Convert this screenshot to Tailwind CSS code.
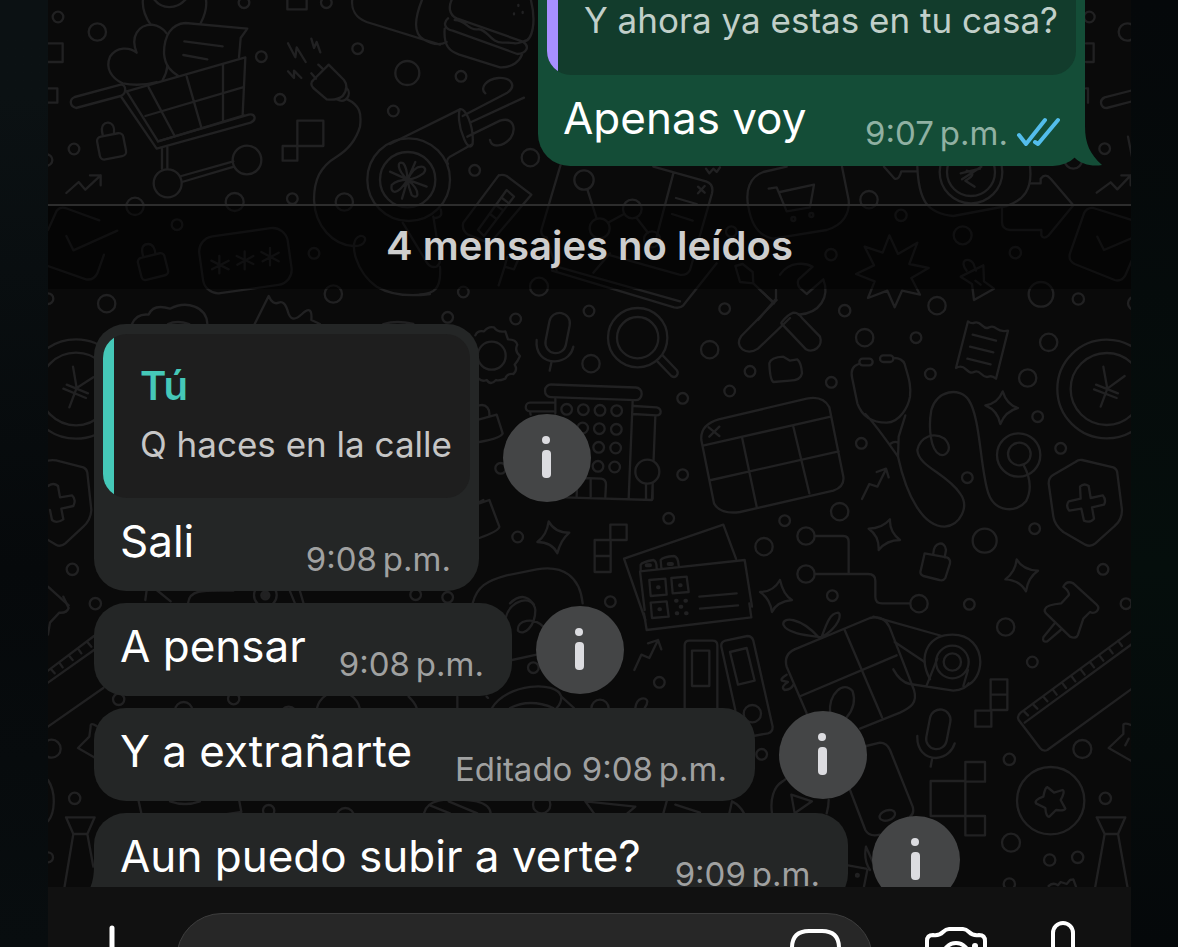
<!DOCTYPE html>
<html lang="es">
<head>
    <meta charset="UTF-8">
    <meta name="viewport" content="width=device-width, initial-scale=1.0">
    <title>Chat</title>
    <script src="https://cdn.jsdelivr.net/npm/@tailwindcss/browser@4"></script>
</head>
<body class="flex h-screen overflow-hidden bg-[#070b0d] font-[Inter,'Liberation_Sans',sans-serif]">
    <div class="w-12 shrink-0 bg-linear-to-b from-[#0b1113] from-10% via-[#06090b] via-60% to-[#080d0f]"></div>

    <main class="flex min-w-0 flex-1 flex-col bg-[#0a0a0a]">
        <section class="relative flex-1 overflow-hidden">
            <!-- Wallpaper -->
            <svg class="absolute inset-0 h-full w-full" viewBox="144 0 3249 2661" preserveAspectRatio="xMinYMin slice" fill="none" stroke="#212122" stroke-width="7" stroke-linecap="round" stroke-linejoin="round" aria-hidden="true">
                <!-- cart, plug, locks -->
                <g>
                    <circle cx="174" cy="51" r="16"/><circle cx="292" cy="96" r="26"/><circle cx="732" cy="8" r="16"/><circle cx="979" cy="8" r="16"/>
                    <circle cx="784" cy="170" r="16"/><circle cx="1073" cy="146" r="16"/><circle cx="840" cy="298" r="16"/><circle cx="1180" cy="333" r="16"/>
                    <circle cx="222" cy="447" r="16"/><circle cx="140" cy="480" r="17"/><circle cx="405" cy="619" r="26"/><circle cx="704" cy="606" r="27"/>
                    <circle cx="877" cy="596" r="16"/><circle cx="1033" cy="606" r="26"/><circle cx="531" cy="674" r="16"/><circle cx="942" cy="760" r="16"/>
                    <circle cx="1000" cy="882" r="26"/>
                    <path d="M144 130h44v56h-44M144 265h28v43h-28M862 -10v38h58v-38"/>
                    <path d="M452 74C415 20 430 -20 440 -30M602 70C622 30 622 0 612 -20M460 -5C485 30 530 30 560 -5"/>
                    <path d="M410 158C390 110 415 74 456 74Q484 78 500 100M410 158C388 140 350 140 330 170C315 205 335 235 368 250Q420 260 470 246M488 240Q500 220 502 198"/>
                    <path d="M742 86L556 69C515 72 492 105 492 160C495 200 515 215 534 227M742 86L722 114L717 172M553 124L668 139M550 165L622 178"/>
                    <path d="M380 274L736 172L728 344M380 274L474 424L732 346M446 262L524 408M560 230L604 382M669 193V364M436 348L728 262"/>
                    <path d="M362 254L224 291C208 298 208 318 228 324L362 288C382 280 378 252 362 254M362 288L470 446L752 368C772 358 764 340 746 344L474 424M486 446V506M502 442V506M544 528L700 484M546 546L702 500"/>
                    <circle cx="503" cy="550" r="42"/><circle cx="741" cy="480" r="43"/>
                    <rect x="295" y="404" width="80" height="70" rx="14" transform="rotate(-11 335 440)"/><path d="M308 404C300 375 315 367 325 368C340 370 344 385 342 400"/>
                    <path d="M199 579L236 546L256 569L302 526M270 526H302V556"/>
                    <path d="M892 362H970V438H892ZM892 438V482H848V438H892"/>
                    <path d="M864 130L886 172L890 142L917 186M934 116L942 144L950 126L961 157M864 214L882 234V212L904 234"/>
                    <path d="M986 194L1032 240Q1048 262 1028 288Q1010 302 980 298L940 264Q928 250 940 240ZM955 194L970 208M934 220L948 236M1010 298C1040 314 1056 280 1040 264M1042 298C1080 316 1085 340 1080 380C1065 430 1035 455 1010 470C960 500 942 540 942 600C945 680 1000 735 1060 738C1100 740 1105 705 1080 708C1040 720 1070 820 1130 860Q1190 895 1290 882"/>
                    <path d="M144 690L170 632Q180 620 196 624L298 661M199 708L220 751L352 692M312 764L292 820Q280 842 258 838L144 798"/>
                    <rect x="418" y="766" width="82" height="68" rx="12" transform="rotate(-14 458 800)"/><path d="M430 770C420 740 432 732 445 732C460 732 466 750 466 762"/>
                    <rect x="602" y="696" width="268" height="172" rx="46" transform="rotate(-8 736 780)"/>
                    <path d="M658 768V820M634 782L686 808M686 782L636 808M734 754V808M710 768L760 792M760 768L712 794M810 744V796M784 756L836 784M836 758L788 784"/>
                    <path d="M1058 -10C1050 30 1070 55 1100 66L1320 134M1270 -10C1240 60 1240 100 1270 118Q1310 142 1340 126"/>
                </g>
                <!-- burger, coffee, tablet -->
                <g transform="translate(1170 0)">
                    <path d="M190 -10C172 20 178 45 200 55L396 124C430 128 440 60 420 -10M174 55C158 68 164 88 188 92L382 162C410 160 420 140 400 126M194 60C230 60 232 92 262 88S300 130 340 128S370 136 396 126M164 86C160 140 180 154 208 164L330 202C370 204 390 180 396 164"/>
                    <path d="M385 15v3M372 40v3M398 36v3"/>
                    <circle cx="52" cy="219" r="36"/><circle cx="213" cy="229" r="16"/><circle cx="421" cy="473" r="26"/><circle cx="254" cy="511" r="16"/>
                    <path d="M0 432L210 328M210 328C226 320 252 380 248 430C244 450 228 436 220 410C206 380 204 340 210 328M248 432L180 470Q166 480 174 492M218 348L352 278C380 258 365 232 325 234C285 238 270 266 286 280M244 366L402 293M232 410L330 362C370 350 380 385 362 414C340 440 305 445 300 420"/>
                    <circle cx="56" cy="539" r="124"/><circle cx="53" cy="539" r="83"/>
                    <path d="M53 539C20 510 20 480 40 490Q50 500 53 539C80 480 120 500 100 520Q80 535 53 539C100 580 80 600 65 585Q55 560 53 539C20 590 0 580 5 555Q20 540 53 539M53 539L0 515M53 539L110 560M53 539L76 486M53 539L36 596"/>
                    <path d="M38 668L106 780Q118 806 140 800Q152 790 150 776L130 650M152 628Q160 652 136 654M150 800C155 870 130 880 90 884"/>
                    <path d="M326 526L220 668Q214 690 234 704L300 730L424 584L350 528Q338 522 326 526M350 570L264 690L282 708L372 590ZM318 616L338 630M300 642L318 656M336 594L354 608"/>
                    <path d="M352 770L344 800L372 808L384 780M344 800L326 856"/>
                    <circle cx="582" cy="540" r="29"/><circle cx="727" cy="627" r="28"/><circle cx="629" cy="685" r="30"/><circle cx="786" cy="718" r="24"/><path d="M592 568L620 656M654 668L702 642M740 654L774 698"/>
                    <path d="M512 494L454 690Q452 710 470 712L500 810M790 500L948 544Q972 552 966 580L900 810Q890 828 868 824L640 760M850 520L800 710M858 594L920 612M846 642L908 662M924 560L944 578M944 558L924 580"/>
                    <path d="M486 812L852 922Q870 926 880 916L980 790M500 800L870 904M610 818L660 760M948 506L958 520L970 506L980 516L990 502"/>
                    <circle cx="447" cy="860" r="27"/><circle cx="220" cy="876" r="16"/><circle cx="1024" cy="695" r="16"/>
                    <path d="M1190 500L1120 516C1080 530 1065 570 1075 620C1085 680 1110 710 1150 716L1310 690C1360 675 1380 640 1376 600L1356 500M1136 566L1160 562L1190 634L1260 622L1272 554L1170 576"/>
                    <path d="M1036 798L1058 792L1088 816L1090 850L1050 846ZM1090 850L1152 910M1104 960L1158 896"/>
                    <circle cx="1210" cy="657" r="6"/><circle cx="1264" cy="645" r="6"/>
                </g>
                <!-- rupee, starburst -->
                <g transform="translate(2340 0)">
                    <circle cx="928" cy="51" r="16"/><circle cx="1042" cy="96" r="26"/><circle cx="974" cy="446" r="16"/><circle cx="880" cy="480" r="26"/>
                    <path d="M918 130H941V186H918M918 265H924V308M1060 270L974 292C956 300 962 324 980 324L1060 303M1044 410L1056 470M950 578L992 547L1012 568L1052 526M1024 526H1052V556"/>
                    <path d="M412 500C416 600 440 640 520 648L680 618C730 600 758 570 750 500M312 500L344 536Q358 540 364 514H408"/>
                    <circle cx="573" cy="516" r="94"/><circle cx="573" cy="516" r="72"/><path d="M542 520L600 506M546 538L604 500M560 512Q596 520 556 542L584 560"/>
                    <path d="M752 550H782V536Q796 518 812 536L880 616L806 706Q790 720 784 706V690H690Q666 688 666 666V622"/>
                    <circle cx="267" cy="599" r="26"/><circle cx="363" cy="646" r="17"/><circle cx="548" cy="706" r="27"/><circle cx="706" cy="758" r="17"/><circle cx="153" cy="764" r="17"/>
                    <circle cx="471" cy="917" r="26"/><circle cx="783" cy="883" r="37"/><circle cx="895" cy="897" r="17"/><circle cx="194" cy="932" r="17"/><circle cx="1064" cy="910" r="20"/>
                    <path d="M328 706L354 762L412 728L388 792L446 804L394 834L420 884L366 872L344 922L322 872L264 894L284 844L228 822L282 796L254 740L308 758Z"/>
                    <path d="M0 824C30 780 80 790 98 800L56 838Q50 850 58 862L80 882L130 838C150 890 120 940 56 944"/>
                    <path d="M560 812C535 780 565 770 580 790L588 812M542 830L610 796L612 844L642 866L582 900L576 852ZM586 842L602 854"/>
                    <path d="M1056 660L940 624Q920 622 912 640L870 760Q864 782 884 792L1004 840Q1024 846 1036 826L1056 780M952 710L972 750L1056 714"/>
                </g>
                <!-- left edge: yen, shield -->
                <g transform="translate(0 870)">
                    <circle cx="144" cy="26" r="16"/><circle cx="320" cy="41" r="26"/><circle cx="217" cy="838" r="17"/><circle cx="286" cy="941" r="17"/>
                    <circle cx="228" cy="297" r="149"/><circle cx="228" cy="297" r="109"/><path d="M219 230L230 294L280 262M230 294L208 352M200 284L264 310M190 296L258 324"/>
                    <path d="M144 512Q160 508 180 514L250 532Q260 536 262 548L274 660Q272 690 250 710L196 760Q182 772 168 764L144 750M144 588Q160 576 174 588L180 622L216 616Q230 628 220 648L184 656L190 688Q170 702 156 690L150 660"/>
                    <path d="M396 102Q410 70 446 74Q460 40 510 56C560 30 620 50 622 102M504 102Q530 90 568 102M764 102L806 18Q818 46 836 38T864 66T906 72T934 90L960 102M1150 102Q1190 90 1240 102"/>
                    <path d="M144 890L206 946M436 930L440 900M470 900L512 934M564 940C568 900 600 900 700 902M870 904L884 938M900 904L910 938"/><circle cx="796" cy="916" r="34"/><circle cx="796" cy="916" r="12" fill="#212122"/>
                </g>
                <!-- gear, mic, magnifier, building -->
                <g transform="translate(1170 870)">
                    <circle cx="173" cy="82" r="16"/><circle cx="377" cy="87" r="16"/><circle cx="597" cy="63" r="16"/><circle cx="603" cy="221" r="26"/><circle cx="959" cy="179" r="26"/><circle cx="1004" cy="56" r="16"/><circle cx="1080" cy="244" r="16"/><circle cx="1019" cy="303" r="16"/><circle cx="878" cy="325" r="16"/><circle cx="878" cy="554" r="16"/><circle cx="836" cy="685" r="16"/><circle cx="1122" cy="770" r="26"/><circle cx="1184" cy="692" r="16"/><circle cx="332" cy="535" r="16"/><circle cx="383" cy="741" r="16"/><circle cx="661" cy="935" r="16"/><circle cx="77" cy="914" r="16"/><circle cx="173" cy="922" r="16"/>
                    <circle cx="305" cy="197" r="42"/>
                    <path d="M256 136Q262 120 282 124Q294 108 312 112Q322 128 346 124Q352 142 354 148Q378 148 382 164Q372 182 390 198Q382 216 374 224Q384 240 370 252Q350 250 346 266Q326 274 318 270Q302 288 290 270Q276 276 266 266"/>
                    <rect x="472" y="68" width="62" height="122" rx="31" transform="rotate(11 503 129)"/><path d="M440 150C436 190 460 214 495 214C530 212 546 190 550 170M484 218L479 242"/>
                    <circle cx="743" cy="143" r="89"/><circle cx="743" cy="143" r="62"/><path d="M802 214L844 258C858 268 868 250 860 240L818 196"/>
                    <rect x="465" y="288" width="290" height="38" rx="18" transform="rotate(2 610 306)"/><path d="M490 338H420C404 338 402 364 420 364H490M496 326V370M728 332L716 626M732 348L800 352C816 356 816 376 800 376L728 372M796 378L786 630L520 622M768 580V626M788 580V626M560 618L562 574Q566 564 580 564L634 566Q648 568 648 584L646 620M602 566V620M420 366L422 374"/>
                    <g><circle cx="530" cy="358" r="16"/><circle cx="580" cy="359" r="16"/><circle cx="630" cy="361" r="16"/><circle cx="680" cy="362" r="16"/><circle cx="578" cy="414" r="16"/><circle cx="628" cy="416" r="16"/><circle cx="679" cy="418" r="16"/><circle cx="626" cy="472" r="16"/><circle cx="677" cy="474" r="16"/><circle cx="624" cy="529" r="16"/><circle cx="674" cy="531" r="16"/><circle cx="772" cy="545" r="36" fill="#0a0a0a"/></g>
                    <path d="M268 346C290 340 300 360 298 376M268 388L320 374L338 430Q334 444 268 456M268 636L280 630M268 640L298 630L328 710Q328 722 268 744"/>
                    <path d="M476 694Q494 728 538 728Q512 750 502 790Q486 756 442 756Q470 736 476 694ZM661 704H710V750H661ZM661 750H614V798H662V752M614 798V846H662V798"/>
                    <path d="M702 806L1000 704L1038 806M702 806L766 990M750 844L1064 810L1086 950M750 844L764 960M752 840V824Q756 816 790 810Q800 812 800 836M814 834L812 810Q820 800 852 798Q864 800 866 826M928 920L1040 910M778 870L826 866L830 914L782 918ZM844 864L890 860L896 906L848 910Z"/>
                    <path d="M804 892h2M870 886h2M858 932h2M886 932h2M872 950h2M770 826h10M836 822h10" stroke-width="12"/>
                    <path d="M248 940C260 890 290 872 350 856L440 838C520 824 570 860 578 940M360 940Q400 900 432 944"/>
                    <path d="M1110 0L1152 38L1054 138C1030 170 1070 200 1104 176L1200 84M1158 0V24M1150 40L1160 30"/>
                    <path d="M1138 220Q1142 202 1180 200L1200 212L1222 208Q1234 218 1236 250Q1232 272 1200 272L1150 276Q1140 270 1138 220"/>
                    <path d="M986 388L1250 326Q1300 316 1318 352L1360 560Q1364 590 1330 602L1050 666Q990 674 972 640L934 450Q930 404 986 388M942 466L1322 380M964 570L1346 484M1056 442L1100 650M1210 410L1258 610M956 412L988 438M988 410L958 440"/>
                    <path d="M1170 870Q1180 915 1206 930Q1160 935 1146 966Q1140 925 1110 906Q1150 906 1170 870"/>
                </g>
                <!-- stethoscope, receipt, coin, shield, circuit -->
                <g transform="translate(2340 870)">
                    <circle cx="254" cy="143" r="26"/><circle cx="408" cy="143" r="16"/><circle cx="451" cy="252" r="16"/><circle cx="806" cy="157" r="26"/><circle cx="743" cy="264" r="26"/><circle cx="154" cy="277" r="16"/><circle cx="773" cy="380" r="16"/><circle cx="842" cy="475" r="16"/><circle cx="244" cy="460" r="16"/><circle cx="562" cy="563" r="16"/><circle cx="179" cy="665" r="26"/><circle cx="614" cy="752" r="36"/><circle cx="764" cy="716" r="16"/><circle cx="969" cy="838" r="16"/><circle cx="157" cy="917" r="16"/><circle cx="568" cy="943" r="16"/><circle cx="1038" cy="941" r="16"/>
                    <path d="M236 222Q210 230 216 262L232 340C250 390 290 398 320 398C360 396 385 350 390 320C394 280 384 260 374 222Q366 204 342 204M256 372Q284 400 354 500L356 440L376 376M330 462Q344 452 354 458"/>
                    <rect x="238" y="206" width="40" height="20" rx="10"/><rect x="300" y="196" width="40" height="20" rx="10"/>
                    <path d="M354 500C380 620 430 710 494 710C540 706 570 650 540 610C500 550 415 530 412 480C420 440 460 425 494 446C520 475 500 500 480 494C450 480 445 410 454 360C470 300 540 290 566 330C600 380 600 520 622 600C640 670 710 670 738 634C756 600 750 560 730 524"/>
                    <circle cx="716" cy="495" r="65"/><circle cx="718" cy="492" r="34"/>
                    <path d="M564 94Q574 102 584 98T606 106T628 112T650 116T684 122L648 266Q636 256 626 260T604 252T582 246T558 238T528 234ZM578 134L648 152M570 170L640 187M562 206L632 223"/>
                    <path d="M668 304Q680 344 714 354Q676 364 661 402Q654 362 616 346Q654 340 668 304ZM330 688Q328 726 360 750Q320 750 296 780Q298 738 266 716Q306 716 330 688ZM710 808Q728 840 774 842Q744 862 738 904Q718 870 676 868Q706 846 710 808Z"/>
                    <circle cx="980" cy="297" r="148"/><circle cx="980" cy="297" r="108"/><path d="M970 230L982 296L1034 258M982 296L962 350M948 284L1014 310M942 298L1010 324"/>
                    <path d="M906 510L1000 532Q1012 538 1012 550L1026 660Q1026 690 1004 708L946 760Q932 772 916 764L850 726Q824 706 820 680L806 580Q806 564 818 556L886 516Q896 508 906 510"/>
                    <path d="M900 590Q912 578 926 588L932 624L968 616Q980 630 972 644L936 652L942 686Q930 700 912 692L904 656L868 662Q856 648 866 634L902 626Z"/>
                    <path d="M246 627L268 582L292 590L318 538M290 546L318 536L326 562"/>
                    <circle cx="78" cy="738" r="26"/><circle cx="78" cy="852" r="26"/><circle cx="417" cy="941" r="26"/><path d="M104 738H190Q206 738 206 756V850M104 852H264Q286 852 286 872V920Q286 940 306 940H390"/>
                    <path d="M434 790L500 802Q512 806 510 820L496 864Q490 874 478 870L430 858Q418 852 422 842ZM460 790C462 756 494 750 498 780L494 802"/>
                    <path d="M4 98Q20 76 40 68Q56 68 66 84L120 140C130 170 100 190 78 178L4 100"/>
                </g>
                <!-- left bottom -->
                <g transform="translate(0 1800)">
                    <path d="M190 -10L206 24Q200 40 178 38L150 68L144 104M144 212L282 108M144 248L282 150M144 380L310 264M152 206L164 220M178 188L188 202M206 166L218 180M234 146L244 160M262 126L274 140M290 378Q270 366 272 380L268 410L234 444L290 476"/>
                    <circle cx="155" cy="446" r="27"/><circle cx="224" cy="595" r="17"/><circle cx="144" cy="772" r="15"/><circle cx="356" cy="298" r="17"/><circle cx="701" cy="296" r="17"/><circle cx="551" cy="332" r="26"/><circle cx="866" cy="346" r="26"/><circle cx="1015" cy="340" r="66"/><circle cx="806" cy="632" r="17"/><circle cx="1036" cy="650" r="26"/>
                    <path d="M144 540C170 580 164 640 144 664M198 652H284L262 702H220ZM220 702L192 870M262 702L280 800M416 604L424 640M718 604L724 636L670 644M510 604Q555 620 600 604"/>
                </g>
                <!-- tickets, binders -->
                <g transform="translate(1170 1800)">
                    <circle cx="430" cy="203" r="16"/><circle cx="808" cy="247" r="16"/><circle cx="630" cy="325" r="26"/><circle cx="1115" cy="463" r="16"/><circle cx="455" cy="614" r="26"/><circle cx="1087" cy="341" r="26"/>
                    <path d="M348 50C360 0 430 -20 436 30C436 80 400 110 384 92C380 60 430 50 460 80M366 180L440 164M762 40L770 90L1084 52L1078 10M930 26L1044 16M782 8L830 4L836 50L786 54Z"/>
                    <path d="M808 28h2M860 40h2M888 40h2" stroke-width="12"/>
                    <path d="M733 210L754 164L778 174L804 120M774 130L804 120L814 148"/>
                    <path d="M884 330V136Q884 122 898 122H968Q982 122 982 136V330M906 152H958V258H906ZM994 140Q992 126 1006 122L1072 108Q1086 108 1090 122L1148 380Q1148 396 1134 400L1090 408M994 140L1036 330M1020 156L1070 144L1094 242L1044 254Z"/>
                    <path d="M306 324C350 250 500 240 514 290Q514 310 500 324M360 324Q420 294 490 324M514 290L552 324M736 324C740 290 770 290 772 304Q772 314 764 324M290 290L294 294M202 290V324M56 290Q76 310 80 324"/>
                    <path d="M102 640C110 600 160 590 260 604Q300 614 302 640M120 616L180 640M176 604L262 640M586 604L612 640M586 604L736 620L712 640M820 640L830 604M856 614L930 638M1026 604L1018 640M1026 604Q1050 616 1062 640M1178 544C1150 560 1140 600 1146 640"/>
                </g>
                <!-- gift, tape, ruler, badge -->
                <g transform="translate(2340 1800)">
                    <circle cx="677" cy="81" r="26"/><circle cx="757" cy="186" r="16"/><circle cx="907" cy="447" r="27"/><circle cx="688" cy="478" r="17"/><circle cx="976" cy="595" r="17"/><circle cx="693" cy="728" r="27"/><circle cx="809" cy="780" r="17"/><circle cx="893" cy="772" r="17"/><circle cx="688" cy="852" r="17"/>
                    <path d="M44 148L270 54Q310 44 328 80L402 270C414 310 390 324 360 338L240 386M44 148Q10 164 20 200L80 340M62 288L350 166M194 90L306 352M116 112C60 50 6 50 10 74C20 100 80 106 124 112C180 80 186 40 174 38C150 40 140 70 126 108M150 340C146 280 190 240 218 274C230 310 210 340 200 352M20 224Q0 236 6 242L24 246Q0 260 14 270Q34 268 40 254"/>
                    <path d="M280 50L486 108M344 126L434 186M340 208Q360 246 390 252L520 272Q556 270 566 250M440 256L472 176M564 210L550 258"/>
                    <path d="M450 238C410 160 450 104 518 104C570 104 600 140 601 186C600 220 584 246 562 256"/><circle cx="517" cy="186" r="49"/><circle cx="517" cy="186" r="26"/>
                    <path d="M850 -40Q860 -60 880 -50L950 14Q960 24 950 34Q940 42 930 36L910 56L894 104Q888 118 870 110L802 44Q790 34 796 26Q800 14 844 10L866 -14Q870 -24 850 -40M824 70L790 112Q786 128 802 124L842 90"/>
                    <path d="M1056 92L722 338Q710 348 716 360L780 444Q790 456 802 450L1056 266M734 368L1056 132M732 334L744 346M760 314L772 326M790 290L802 304M818 268L830 284M846 248L858 264M874 228L886 244M902 208L914 224M930 186L942 202M958 166L970 182M986 144L998 160M1014 122L1026 138M1056 376Q1030 366 1030 376V402L986 444L1056 484M1046 416L1036 436"/>
                    <path d="M632 238H682V330H632ZM632 284H682M634 332H586V380H634Z"/>
                    <rect x="444" y="328" width="62" height="120" rx="31" transform="rotate(11 475 388)"/><path d="M412 408C410 450 436 474 468 474C500 472 518 450 524 430M456 478L452 500"/>
                    <path d="M452 543H556V648H452ZM556 486H615V545H556V486M556 648H615V706H556V648"/>
                    <circle cx="812" cy="602" r="101"/><path d="M802 562Q808 566 822 578L848 570Q856 574 842 600L856 626Q852 634 828 630L808 650Q798 652 796 624L768 610Q762 600 790 590Q796 560 802 562"/>
                    <path d="M950 652H1036L1014 702H974ZM974 702L944 870M1014 702L1044 870"/>
                    <path d="M258 438L300 428Q320 428 330 450L398 620Q404 640 390 650M210 570L256 690Q268 712 300 704M34 584L96 604L44 640ZM146 600Q146 620 140 640M0 550L16 538M204 796L258 806M250 870L262 810M258 740L280 790M258 740Q250 780 270 810"/>
                    <ellipse cx="322" cy="646" rx="24" ry="15" transform="rotate(-18 322 646)"/><circle cx="232" cy="826" r="4"/>
                    <path d="M806 858Q820 846 834 856L842 846L860 852L870 840L880 838L888 860"/>
                </g>
            </svg>

            <div class="relative">
                <!-- Outgoing message -->
                <article class="relative mr-[46px] ml-auto w-[547px] max-w-full rounded-b-[32px] bg-[#144d37] px-[9px]">
                    <blockquote class="flex h-[75px] overflow-hidden rounded-b-3xl bg-[#123c2c]">
                        <span class="w-[11px] shrink-0 bg-[#a78fff]"></span>
                        <p class="pl-[26px] text-[35px] leading-10 whitespace-nowrap text-[#c1cfc9]">Y ahora ya estas en tu casa?</p>
                    </blockquote>
                    <div class="flex items-end justify-between pr-4 pb-[13px] pl-4">
                        <p class="self-start pt-[15px] pb-[7px] text-[44px] leading-14 whitespace-nowrap text-white">Apenas voy</p>
                        <div class="flex items-center gap-2 text-[33px] leading-10 whitespace-nowrap text-[#90b1a3]">
                            <time>9:07&#8202;&#8202;p.m.</time>
                            <svg class="h-8 w-11" viewBox="0 0 44 32" fill="none" stroke="#53bdeb" stroke-width="4" stroke-linecap="round" stroke-linejoin="round" aria-label="Leído"><path d="M3 18L10 27L29 3M19 25L22 27L42 3"/></svg>
                        </div>
                    </div>
                    <svg class="absolute right-[-17px] bottom-0 h-10 w-11" viewBox="0 0 44 40" fill="#144d37" aria-hidden="true"><path d="M27 0C27 18 32 28 44 39C34 41 23 38 17 32L8 22V0Z"/></svg>
                </article>

                <!-- Unread marker -->
                <div class="mt-[38px] border-t-2 border-[#2d2d2d] bg-black/50">
                    <h2 class="pt-3 pb-[15px] text-center text-[40px] leading-14 font-semibold text-[#cecece]">4 mensajes no leídos</h2>
                </div>

                <!-- Incoming messages -->
                <div class="flex flex-col gap-3 pt-[35px] pl-[46px] text-white">
                    <div class="flex items-center gap-6">
                        <article class="w-[385px] rounded-[32px] bg-[#242626]">
                            <blockquote class="mx-[9px] mt-[10px] flex h-[164px] overflow-hidden rounded-3xl bg-[#1e1e1e]">
                                <span class="w-[11px] shrink-0 bg-[#45c8b8]"></span>
                                <div class="pt-[23px] pl-[26px] leading-[58px] whitespace-nowrap">
                                    <p class="text-[40px] font-semibold text-[#45c8b8]">Tú</p>
                                    <p class="text-[35px] text-[#c6c6c6]">Q haces en la calle</p>
                                </div>
                            </blockquote>
                            <div class="flex items-end justify-between pr-7 pb-3 pl-[26px] whitespace-nowrap">
                                <p class="pt-[15px] pb-[10px] text-[44px] leading-14">Sali</p>
                                <time class="text-[33px] leading-10 text-[#a0a1a1]">9:08&#8202;&#8202;p.m.</time>
                            </div>
                        </article>
                        <button class="-my-1 size-[88px] shrink-0 rounded-full bg-[#444546]" aria-label="Información">
                            <svg class="size-full" viewBox="0 0 88 88" fill="#dcdce0"><circle cx="43" cy="26" r="4"/><rect x="39" y="36" width="9" height="28" rx="4"/></svg>
                        </button>
                    </div>
                    <div class="flex items-center gap-6">
                        <article class="flex w-[418px] items-end justify-between rounded-[32px] bg-[#242626] pr-7 pb-3 pl-[26px] whitespace-nowrap">
                            <p class="pt-[15px] pb-[10px] text-[44px] leading-14">A pensar</p>
                            <time class="text-[33px] leading-10 text-[#a0a1a1]">9:08&#8202;&#8202;p.m.</time>
                        </article>
                        <button class="-my-1 size-[88px] shrink-0 rounded-full bg-[#444546]" aria-label="Información">
                            <svg class="size-full" viewBox="0 0 88 88" fill="#dcdce0"><circle cx="43" cy="26" r="4"/><rect x="39" y="36" width="9" height="28" rx="4"/></svg>
                        </button>
                    </div>
                    <div class="flex items-center gap-6">
                        <article class="flex w-[661px] items-end justify-between rounded-[32px] bg-[#242626] pr-7 pb-3 pl-[26px] whitespace-nowrap">
                            <p class="pt-[15px] pb-[10px] text-[44px] leading-14">Y a extrañarte</p>
                            <time class="text-[33px] leading-10 text-[#a0a1a1]">Editado 9:08&#8202;&#8202;p.m.</time>
                        </article>
                        <button class="-my-1 size-[88px] shrink-0 rounded-full bg-[#444546]" aria-label="Información">
                            <svg class="size-full" viewBox="0 0 88 88" fill="#dcdce0"><circle cx="43" cy="26" r="4"/><rect x="39" y="36" width="9" height="28" rx="4"/></svg>
                        </button>
                    </div>
                    <div class="flex items-center gap-6">
                        <article class="relative flex w-[754px] items-end justify-between rounded-[32px] bg-[#242626] pr-7 pb-3 pl-[26px] whitespace-nowrap">
                            <svg class="absolute bottom-0 left-[-17px] h-10 w-11" viewBox="0 0 44 40" fill="#242626" aria-hidden="true"><path d="M17 0C17 18 12 28 0 39C10 41 21 38 27 32L36 22V0Z"/></svg>
                            <p class="pt-[15px] pb-[10px] text-[44px] leading-14">Aun puedo subir a verte?</p>
                            <time class="text-[33px] leading-10 text-[#a0a1a1]">9:09&#8202;&#8202;p.m.</time>
                        </article>
                        <button class="-my-1 size-[88px] shrink-0 rounded-full bg-[#444546]" aria-label="Información">
                            <svg class="size-full" viewBox="0 0 88 88" fill="#dcdce0"><circle cx="43" cy="26" r="4"/><rect x="39" y="36" width="9" height="28" rx="4"/></svg>
                        </button>
                    </div>
                </div>
            </div>
        </section>

        <!-- Composer -->
        <footer class="flex h-[60px] shrink-0 items-start overflow-hidden bg-[#111111] pt-[26px] pr-11 pl-[38px] text-white">
            <button class="mt-3 mr-[38px] shrink-0" aria-label="Adjuntar">
                <svg class="size-[52px]" viewBox="0 0 52 52" fill="none" stroke="currentColor" stroke-width="5" stroke-linecap="round"><path d="M26 3V49M3 26H49"/></svg>
            </button>
            <div class="relative flex-1">
                <input type="text" class="block h-[92px] w-full rounded-[46px] border border-[#3d3d3d] bg-[#272727] px-8 text-[44px] outline-none" aria-label="Mensaje">
                <button class="absolute top-[15px] right-8" aria-label="Stickers">
                    <svg class="size-[52px]" viewBox="0 0 52 52" fill="none" stroke="currentColor" stroke-width="4" stroke-linejoin="round"><path d="M30 50H20Q3 50 3 33V20Q3 3 20 3H33Q50 3 50 20V30ZM30 50Q28 32 50 30"/></svg>
                </button>
            </div>
            <button class="mt-3 ml-[51px] shrink-0" aria-label="Cámara">
                <svg class="h-14 w-16" viewBox="0 0 64 56" fill="none" stroke="currentColor" stroke-width="4" stroke-linejoin="round"><path d="M9 10Q15 11 19 7Q22 4 25 4H39Q42 4 45 7Q49 11 55 10Q61 10 61 16V46Q61 52 55 52H9Q3 52 3 46V16Q3 10 9 10Z"/><circle cx="32" cy="31" r="13"/><circle cx="51" cy="21" r="3" fill="currentColor" stroke="none"/></svg>
            </button>
            <button class="mt-2 ml-[51px] shrink-0" aria-label="Nota de voz">
                <svg class="h-16 w-12" viewBox="0 0 48 64" fill="none" stroke="currentColor" stroke-width="4" stroke-linecap="round"><rect x="14" y="2" width="20" height="38" rx="10"/><path d="M4 30Q4 50 24 50T44 30M24 50V62"/></svg>
            </button>
        </footer>
    </main>

    <div class="w-[47px] shrink-0 bg-linear-to-b from-[#05080a] via-[#050e0c] via-60% to-[#05080a]"></div>
</body>
</html>
